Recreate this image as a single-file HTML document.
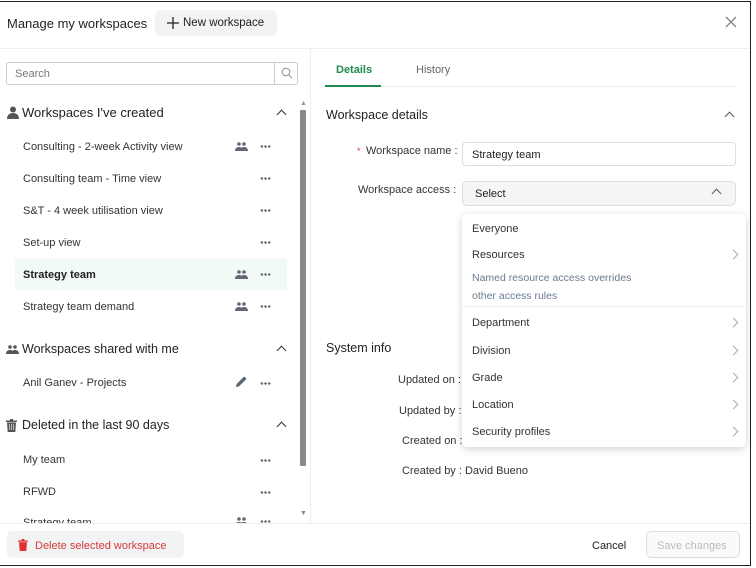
<!DOCTYPE html>
<html><head><meta charset="utf-8"><style>
*{box-sizing:border-box;margin:0;padding:0}
body{width:756px;height:568px;background:#fff;font-family:"Liberation Sans",sans-serif;color:#222;position:relative;overflow:hidden}
.a{position:absolute;white-space:nowrap}
.frame{position:absolute;left:-2px;top:1px;width:753px;height:565px;border:1.5px solid #222;}
.t{font-size:11px;color:#333;margin-top:1px}
.dots{position:absolute;width:11px;height:3px;background:radial-gradient(circle,#666 1.1px,transparent 1.4px) 0 0/3.7px 3px repeat-x}
.chev{position:absolute;width:7px;height:7px;border-left:1.3px solid #333;border-top:1.3px solid #333;transform:rotate(45deg)}
.rch{position:absolute;width:7px;height:7px;border-right:1px solid #aaa;border-top:1px solid #aaa;transform:rotate(45deg)}
.dd{font-size:11px;color:#333;margin-top:1px}
</style></head><body>
<div class="frame"></div>
<div class="a" style="left:7px;top:16px;font-size:13px;color:#222">Manage my workspaces</div>
<div class="a" style="left:155px;top:10px;width:122px;height:26px;background:#f2f3f4;border-radius:6px"></div>
<svg class="a" style="left:167px;top:17px" width="12" height="12" viewBox="0 0 12 12"><path d="M6 0v12M0 6h12" stroke="#222" stroke-width="1.3"/></svg>
<div class="a" style="left:183px;top:17px;font-size:11.5px;color:#222">New workspace</div>
<svg class="a" style="left:725px;top:16px" width="12" height="12" viewBox="0 0 12 12"><path d="M1 1l10 10M11 1L1 11" stroke="#888" stroke-width="1.4"/></svg>
<div class="a" style="left:0;top:48px;width:750px;height:1px;background:#eee"></div>
<div class="a" style="left:310px;top:49px;width:1px;height:474px;background:#eee"></div>
<div class="a" style="left:6px;top:62px;width:292px;height:23px;border:1px solid #ccc;border-radius:3px"></div>
<div class="a" style="left:274px;top:62px;width:1px;height:23px;background:#ccc"></div>
<svg class="a" style="left:281px;top:67px" width="12" height="12" viewBox="0 0 12 12"><circle cx="5" cy="5" r="3.8" fill="none" stroke="#999" stroke-width="1.1"/><path d="M8 8l3 3" stroke="#999" stroke-width="1.1"/></svg>
<div class="a" style="left:15px;top:68px;font-size:11px;color:#777">Search</div>
<div class="a" style="left:300px;top:110px;width:6px;height:356px;background:#8a8a8a;border-radius:1px"></div>
<div class="a" style="left:300px;top:100px;font-size:7px;color:#999">▲</div>
<div class="a" style="left:300px;top:510px;font-size:7px;color:#888">▼</div>

<svg class="a" style="left:7px;top:106px" width="12" height="13" viewBox="0 0 12 13"><circle cx="6" cy="3.5" r="3" fill="#555"/><path d="M0 13c0-4 2.5-6 6-6s6 2 6 6z" fill="#555"/></svg>
<div class="a" style="left:22px;top:105px;font-size:13px;color:#222">Workspaces I've created</div>
<div class="chev" style="left:278px;top:111px"></div>

<div class="a" style="left:15px;top:258px;width:272px;height:32px;background:#f1faf5"></div>
<div class="a t" style="left:23px;top:140px">Consulting - 2-week Activity view</div>
<div class="a t" style="left:23px;top:172px">Consulting team - Time view</div>
<div class="a t" style="left:23px;top:204px">S&amp;T - 4 week utilisation view</div>
<div class="a t" style="left:23px;top:236px">Set-up view</div>
<div class="a t" style="left:23px;top:268px;font-weight:bold;color:#222">Strategy team</div>
<div class="a t" style="left:23px;top:300px">Strategy team demand</div>
<div class="dots" style="left:260px;top:145px"></div>
<div class="dots" style="left:260px;top:177px"></div>
<div class="dots" style="left:260px;top:209px"></div>
<div class="dots" style="left:260px;top:241px"></div>
<div class="dots" style="left:260px;top:273px"></div>
<div class="dots" style="left:260px;top:305px"></div>
<div class="dots" style="left:260px;top:382px"></div>
<div class="dots" style="left:260px;top:459px"></div>
<div class="dots" style="left:260px;top:491px"></div>
<div class="dots" style="left:260px;top:520px"></div>
<svg class="a" style="left:235px;top:142px" width="13" height="9" viewBox="0 0 13 9"><g fill="#667"><circle cx="4" cy="2" r="1.8"/><circle cx="9" cy="2" r="1.8"/><path d="M0 9c0-3 2-4 4-4s4 1 4 4zM5 9c0-3 2-4 4-4s4 1 4 4z"/></g></svg>
<svg class="a" style="left:235px;top:270px" width="13" height="9" viewBox="0 0 13 9"><g fill="#667"><circle cx="4" cy="2" r="1.8"/><circle cx="9" cy="2" r="1.8"/><path d="M0 9c0-3 2-4 4-4s4 1 4 4zM5 9c0-3 2-4 4-4s4 1 4 4z"/></g></svg>
<svg class="a" style="left:235px;top:302px" width="13" height="9" viewBox="0 0 13 9"><g fill="#667"><circle cx="4" cy="2" r="1.8"/><circle cx="9" cy="2" r="1.8"/><path d="M0 9c0-3 2-4 4-4s4 1 4 4zM5 9c0-3 2-4 4-4s4 1 4 4z"/></g></svg>
<svg class="a" style="left:235px;top:517px" width="13" height="6" viewBox="0 0 13 6"><g fill="#667"><circle cx="4" cy="2" r="1.8"/><circle cx="9" cy="2" r="1.8"/><path d="M0 9c0-3 2-4 4-4s4 1 4 4zM5 9c0-3 2-4 4-4s4 1 4 4z"/></g></svg>

<svg class="a" style="left:6px;top:345px" width="13" height="9" viewBox="0 0 13 9"><g fill="#555"><circle cx="4" cy="2" r="1.8"/><circle cx="9" cy="2" r="1.8"/><path d="M0 9c0-3 2-4 4-4s4 1 4 4zM5 9c0-3 2-4 4-4s4 1 4 4z"/></g></svg>
<div class="a" style="left:22px;top:342px;font-size:12.5px;color:#222">Workspaces shared with me</div>
<div class="chev" style="left:278px;top:347px"></div>
<div class="a t" style="left:23px;top:376px">Anil Ganev - Projects</div>
<svg class="a" style="left:235px;top:376px" width="12" height="12" viewBox="0 0 12 12"><path d="M1 11l.6-3L8.5 1.1a1 1 0 011.4 0l1 1a1 1 0 010 1.4L4 10.4z" fill="#5a6675"/></svg>

<svg class="a" style="left:6px;top:419px" width="11" height="13" viewBox="0 0 11 13"><path d="M0 1.5h11v1.5H0zM4 0h3v1.5H4zM1 3.5h9L9.3 13H1.7z" fill="#555"/><path d="M3.5 5v6M5.5 5v6M7.5 5v6" stroke="#fff" stroke-width=".6"/></svg>
<div class="a" style="left:22px;top:418px;font-size:12.5px;color:#222">Deleted in the last 90 days</div>
<div class="chev" style="left:278px;top:423px"></div>
<div class="a t" style="left:23px;top:453px">My team</div>
<div class="a t" style="left:23px;top:485px">RFWD</div>
<div class="a t" style="left:23px;top:516px;height:7px;overflow:hidden">Strategy team</div>

<div class="a" style="left:0;top:523px;width:750px;height:1px;background:#eee"></div>
<div class="a" style="left:7px;top:531px;width:177px;height:27px;background:#f2f3f4;border-radius:5px"></div>
<svg class="a" style="left:18px;top:539px" width="10" height="12" viewBox="0 0 10 12"><path d="M0 1.5h10v1.3H0zM3.5 0h3v1.5h-3zM1 3.3h8L8.3 12H1.7z" fill="#d33"/></svg>
<div class="a" style="left:35px;top:540px;font-size:11px;color:#d63a3a">Delete selected workspace</div>
<div class="a" style="left:592px;top:540px;font-size:11px;color:#222">Cancel</div>
<div class="a" style="left:646px;top:531px;width:94px;height:27px;border:1px solid #ddd;border-radius:5px;background:#fafafa"></div>
<div class="a" style="left:657px;top:540px;font-size:11px;color:#bbb">Save changes</div>

<div class="a" style="left:336px;top:64px;font-size:11px;color:#1e8a4c;font-weight:bold">Details</div>
<div class="a" style="left:416px;top:64px;font-size:11px;color:#666">History</div>
<div class="a" style="left:325px;top:86px;width:411px;height:1px;background:#eee"></div>
<div class="a" style="left:325px;top:85px;width:56px;height:2px;background:#1e8a4c"></div>
<div class="a" style="left:326px;top:108px;font-size:12.5px;color:#222">Workspace details</div>
<div class="chev" style="left:726px;top:113px;border-color:#555"></div>
<div class="a" style="left:357px;top:146px;font-size:9px;color:#e33">*</div>
<div class="a t" style="left:366px;top:144px">Workspace name :</div>
<div class="a" style="left:462px;top:142px;width:274px;height:24px;border:1px solid #ddd;border-radius:4px"></div>
<div class="a t" style="left:472px;top:148px;color:#222">Strategy team</div>
<div class="a t" style="left:358px;top:183px">Workspace access :</div>
<div class="a" style="left:462px;top:181px;width:274px;height:25px;border:1px solid #ddd;border-radius:5px;background:#f4f5f6"></div>
<div class="a t" style="left:475px;top:187px;color:#222">Select</div>
<div class="chev" style="left:713px;top:190px;border-color:#555"></div>

<div class="a" style="left:326px;top:341px;font-size:12.5px;color:#222">System info</div>
<div class="a t" style="left:398px;top:373px">Updated on :</div>
<div class="a t" style="left:399px;top:404px">Updated by :</div>
<div class="a t" style="left:402px;top:434px">Created on :</div>
<div class="a t" style="left:402px;top:464px">Created by : David Bueno</div>

<div class="a" style="left:462px;top:214px;width:284px;height:233px;background:#fff;border-radius:5px;box-shadow:0 2px 8px rgba(0,0,0,.18)"></div>
<div class="a dd" style="left:472px;top:222px">Everyone</div>
<div class="a dd" style="left:472px;top:248px">Resources</div>
<div class="a" style="left:472px;top:272px;font-size:10.5px;color:#6a7a90">Named resource access overrides</div>
<div class="a" style="left:472px;top:290px;font-size:10.5px;color:#6a7a90">other access rules</div>
<div class="a" style="left:462px;top:306px;width:284px;height:1px;background:#eee"></div>
<div class="a dd" style="left:472px;top:316px">Department</div>
<div class="a dd" style="left:472px;top:344px">Division</div>
<div class="a dd" style="left:472px;top:371px">Grade</div>
<div class="a dd" style="left:472px;top:398px">Location</div>
<div class="a dd" style="left:472px;top:425px">Security profiles</div>
<div class="rch" style="left:730px;top:251px"></div>
<div class="rch" style="left:730px;top:319px"></div>
<div class="rch" style="left:730px;top:347px"></div>
<div class="rch" style="left:730px;top:374px"></div>
<div class="rch" style="left:730px;top:401px"></div>
<div class="rch" style="left:730px;top:428px"></div>
</body></html>
